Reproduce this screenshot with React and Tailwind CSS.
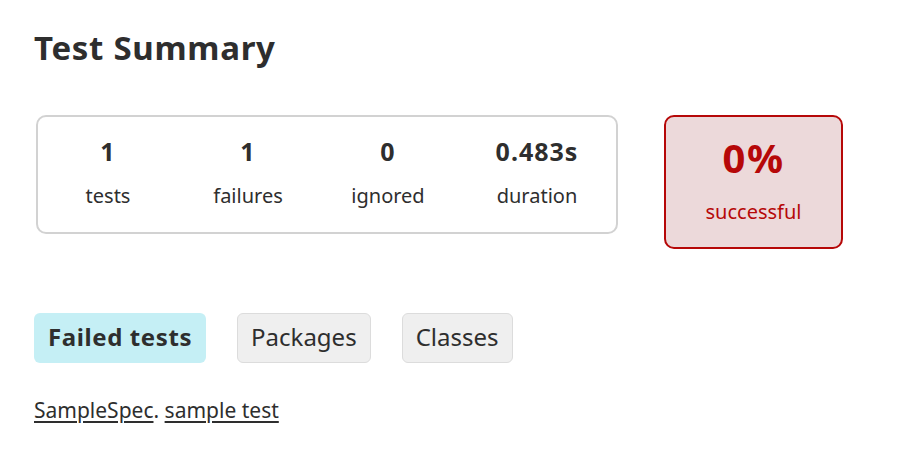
export default function App() {
  const counters = [
    { value: "1", label: "tests", w: "w-[140px]" },
    { value: "1", label: "failures", w: "w-[140px]" },
    { value: "0", label: "ignored", w: "w-[140px]" },
    { value: "0.483s", label: "duration", w: "w-[158px]" },
  ];

  return (
    <div className="min-h-screen bg-white text-[#2e2e2e] px-[34px] pt-[26px] font-['Noto_Sans',sans-serif]">
      <h1 className="text-[33px] font-bold leading-[44px] tracking-[0.7px]">Test Summary</h1>

      <div className="mt-[45px] flex items-start gap-[46px]">
        <div className="ml-[2px] w-[582px] h-[119px] border-2 border-[#d2d2d2] rounded-[10px] flex items-start pt-[17px]">
          {counters.map((c) => (
            <div key={c.label} className={`${c.w} flex flex-col items-center`}>
              <div className="text-[25px] font-bold leading-[34px] tracking-[1px]">{c.value}</div>
              <div className="mt-[14px] text-[20px] leading-[28px]">{c.label}</div>
            </div>
          ))}
        </div>

        <div className="w-[179px] h-[134px] border-2 border-[#b60808] bg-[#ecd9da] rounded-[10px] flex flex-col items-center pt-[14px] text-[#b60808]">
          <div className="text-[40px] font-bold leading-[54px] tracking-[1.5px]">0%</div>
          <div className="mt-[13px] text-[20px] leading-[28px]">successful</div>
        </div>
      </div>

      <div className="mt-[64px] flex items-center gap-[31px]">
        <div className="h-[50px] px-[14px] pb-[3px] rounded-[6px] bg-[#c5eff5] flex items-center text-[24px] font-bold tracking-[0.6px]">
          Failed tests
        </div>
        <div className="h-[50px] px-[13px] pb-[3px] rounded-[6px] bg-[#efefef] border border-[#dcdcdc] flex items-center text-[24px]">
          Packages
        </div>
        <div className="h-[50px] px-[13px] pb-[3px] rounded-[6px] bg-[#efefef] border border-[#dcdcdc] flex items-center text-[24px]">
          Classes
        </div>
      </div>

      <div className="mt-[33px] text-[21px] leading-[28px]">
        <a href="#" className="underline underline-offset-[3px] text-[#2e2e2e]">SampleSpec</a>.{" "}
        <a href="#" className="underline underline-offset-[3px] text-[#2e2e2e]">sample test</a>
      </div>
    </div>
  );
}
